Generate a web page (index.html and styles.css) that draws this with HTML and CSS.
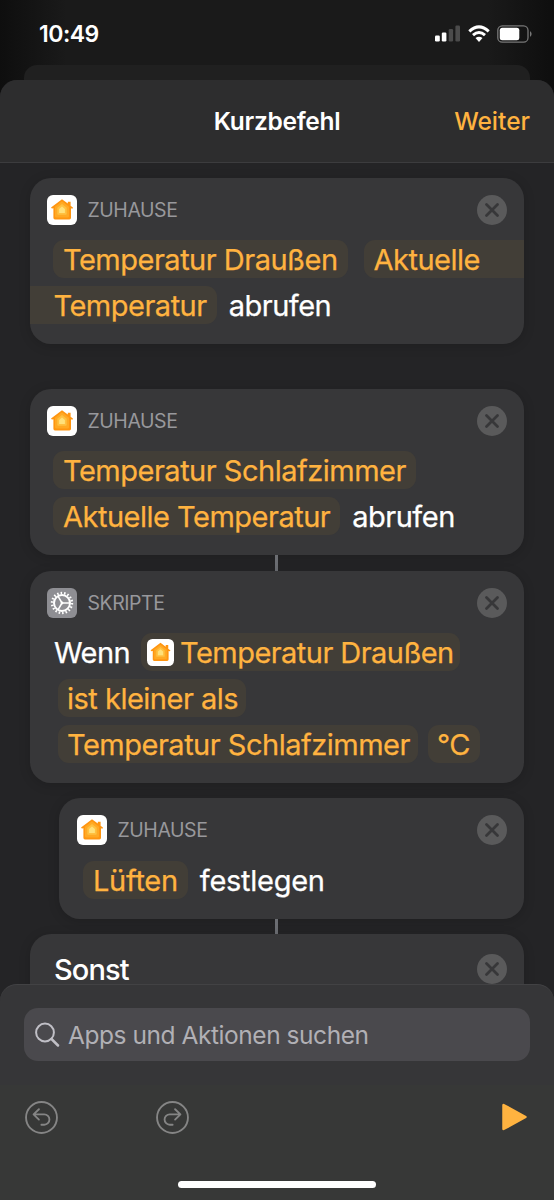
FILE: index.html
```html
<!DOCTYPE html>
<html lang="de">
<head>
<meta charset="utf-8">
<title>Kurzbefehl</title>
<link rel="stylesheet" href="styles.css">
</head>
<body>
<svg class="defs" width="0" height="0" aria-hidden="true">
  <defs>
    <symbol id="home" viewBox="0 0 30 30">
      <rect width="30" height="30" rx="6" fill="#fff"/>
      <path d="M4 12.600 15 4.200l5.800 4.400V6.700h2.800v4.100l2.500 1.900-.8 1-1.300-.5v9.600q0 1.600-1.600 1.600H8q-1.600 0-1.600-1.600v-9.600l-1.500.4z" fill="#ff9510"/>
      <path d="M15 6.300l7 5.500v9.500q0 1.300-1.300 1.300H9.300Q8 22.600 8 21.300v-9.500z" fill="#ffa924"/>
      <path d="M15 9l4.700 3.800v6q0 1-1 1h-7.400q-1 0-1-1v-6z" fill="#ffc040"/>
      <path d="M15 11.500l2.900 2.400v4.100h-5.800v-4.100z" fill="#ffe07a"/>
    </symbol>
    <symbol id="gear" viewBox="0 0 30 30">
      <rect width="30" height="30" rx="6" fill="#8e8e93"/>
      <circle cx="15" cy="15" r="10" fill="none" stroke="#fff" stroke-width="2.400" stroke-dasharray="1.550 1.941"/>
      <circle cx="15" cy="15" r="8" fill="none" stroke="#fff" stroke-width="2"/>
      <path d="M15 15h8M15 15l-4-6.900M15 15l-4 6.900" stroke="#fff" stroke-width="1.500"/>
      <circle cx="15" cy="15" r="1.400" fill="#fff"/>
    </symbol>
    <symbol id="close" viewBox="0 0 30 30">
      <circle cx="15" cy="15" r="15" fill="#5a5a5b"/>
      <path d="M9.500 9.500l11 11m0-11l-11 11" stroke="#373739" stroke-width="2.800" stroke-linecap="round"/>
    </symbol>
  </defs>
</svg>
<div class="screen">
  <div class="status">
    <span class="time">10:49</span>
    <div class="indicators">
      <svg width="26" height="17" viewBox="0 0 26 17"><g fill="#fff"><rect y="10.500" width="4.800" height="6" rx="1.200"/><rect x="6.800" y="7.500" width="4.600" height="9" rx="1.200"/></g><g fill="#4b4b4b"><rect x="13.700" y="4" width="4.400" height="12.500" rx="1.200"/><rect x="20.400" y=".5" width="4.600" height="16" rx="1.200"/></g></svg>
      <svg width="22" height="18" viewBox="0 0 22 18"><g fill="none" stroke="#fff" stroke-width="3"><path d="M1.300 6.300Q11-2.600 20.700 6.300"/><path d="M5 10.200q6-5.300 12 0"/></g><path d="M7.500 13.100q3.500-2.900 7 0L11 16.900z" fill="#fff"/></svg>
      <svg width="36" height="18" viewBox="0 0 36 18"><rect x=".8" y=".8" width="30.200" height="16.400" rx="4.500" fill="none" stroke="#777" stroke-width="1.300"/><rect x="2.800" y="2.800" width="19.500" height="12.400" rx="2.500" fill="#fff"/><path d="M33 6q3.300 3 0 6z" fill="#777"/></svg>
    </div>
  </div>
  <div class="back-sheet"></div>
  <div class="sheet">
    <header class="nav"><h1>Kurzbefehl</h1><a class="next">Weiter</a></header>
    <main class="flow">
      <section class="card detached">
        <div class="head"><svg class="app"><use href="#home"/></svg><span>ZUHAUSE</span><svg class="x"><use href="#close"/></svg></div>
        <div class="row"><b class="pill">Temperatur Draußen</b><b class="pill runs-on">Aktuelle</b></div>
        <div class="row"><b class="pill continued">Temperatur</b><span>abrufen</span></div>
      </section>
      <section class="card">
        <div class="head"><svg class="app"><use href="#home"/></svg><span>ZUHAUSE</span><svg class="x"><use href="#close"/></svg></div>
        <div class="row"><b class="pill">Temperatur Schlafzimmer</b></div>
        <div class="row"><b class="pill">Aktuelle Temperatur</b><span>abrufen</span></div>
      </section>
      <div class="link"></div>
      <section class="card condition">
        <div class="head"><svg class="app"><use href="#gear"/></svg><span>SKRIPTE</span><svg class="x"><use href="#close"/></svg></div>
        <div class="row first"><span>Wenn</span><b class="pill variable"><svg class="mini"><use href="#home"/></svg>Temperatur Draußen</b></div>
        <div class="row"><b class="pill">ist kleiner als</b></div>
        <div class="row"><b class="pill">Temperatur Schlafzimmer</b><b class="pill unit">°C</b></div>
      </section>
      <div class="space"></div>
      <section class="card nested">
        <div class="head"><svg class="app"><use href="#home"/></svg><span>ZUHAUSE</span><svg class="x"><use href="#close"/></svg></div>
        <div class="row"><b class="pill">Lüften</b><span>festlegen</span></div>
      </section>
      <div class="link short"></div>
      <section class="card otherwise"><span>Sonst</span><svg class="x"><use href="#close"/></svg></section>
    </main>
  </div>
  <footer class="dock">
    <div class="search">
      <svg width="26" height="26" viewBox="0 0 26 26" fill="none" stroke="#c0bfc6" stroke-linecap="round"><circle cx="10" cy="10.500" r="8.900" stroke-width="2"/><path d="M16.500 17l6.500 6.500" stroke-width="2.500"/></svg>
      <span>Apps und Aktionen suchen</span>
    </div>
    <div class="tools">
      <svg class="tool" viewBox="0 0 32 32"><circle cx="16" cy="16" r="15"/><path d="M13.500 8L8.300 13l5.200 5M8.800 13h9.900a5 5 0 0 1 0 10h-2.800"/></svg>
      <svg class="tool redo" viewBox="0 0 32 32"><circle cx="16" cy="16" r="15"/><path d="M18.500 8l5.200 5-5.200 5M23.200 13h-9.900a5 5 0 0 0 0 10h2.800"/></svg>
      <svg class="play" width="25" height="28" viewBox="0 0 25 28"><path d="M1.500 2v24L23.500 14z" fill="#ffb340" stroke="#ffb340" stroke-width="2.500" stroke-linejoin="round"/></svg>
    </div>
    <div class="home-bar"></div>
  </footer>
</div>
</body>
</html>
```
FILE: styles.css
```css
* { box-sizing: border-box; }
body { margin: 0; background: #171717; font-family: Inter, "Liberation Sans", sans-serif; color: #fff; }
svg { display: block; flex: none; }
.defs { position: absolute; }
.screen { width: 554px; height: 1200px; overflow: hidden; display: flex; flex-direction: column; background: linear-gradient(90deg, #0e0e0e, #1a1a1a 12%, #1a1a1a 88%, #0e0e0e); }
.status { height: 65px; flex: none; display: flex; justify-content: space-between; padding: 20px 21px 0 39px; }
.time { font-size: 23px; line-height: 28px; font-weight: 600; letter-spacing: -.5px; }
.indicators { display: flex; gap: 7px; padding-top: 5px; }
.back-sheet { height: 15px; flex: none; margin: 0 24px; border-radius: 13px 13px 0 0; background: #202020; }
.sheet { height: 922px; flex: none; overflow: hidden; border-radius: 17px 17px 0 0; background: #242426; }
.nav { height: 83px; border-bottom: 1px solid #3c3c3e; background: #2d2d2e; display: grid; grid-template-columns: 1fr auto 1fr; align-items: center; padding: 0 24px; }
.nav h1 { grid-column: 2; margin: 0; font-size: 24.500px; font-weight: 600; letter-spacing: -.3px; }
.next { justify-self: end; color: #ffb340; font-size: 24.500px; font-weight: 500; }
.flow { padding: 15px 30px 0; }
.card { width: 494px; padding: 17px 17px 20px 24px; border-radius: 21px; background: #373739; box-shadow: 0 2px 12px rgba(0, 0, 0, .16); font-size: 29px; letter-spacing: -.5px; }
.detached { margin-bottom: 45px; }
.head { height: 30px; margin: 0 0 15px -7px; display: flex; align-items: center; gap: 10.500px; color: #98989c; font-size: 19.500px; letter-spacing: -.45px; }
.app, .x { width: 30px; height: 30px; }
.x { margin-left: auto; }
.row { height: 38px; display: flex; align-items: center; gap: 12px; white-space: nowrap; -webkit-text-stroke: .25px; }
.row + .row { margin-top: 8px; }
.pill { height: 38px; display: flex; align-items: center; margin-left: -1px; padding: 0 10px; border-radius: 11px; background: #423e37; color: #ffb340; font-weight: 400; }
.runs-on { flex: 1; margin: 0 -17px 0 4px; border-radius: 11px 0 0 11px; }
.continued { margin-left: -24px; padding-left: 23.500px; border-radius: 0 11px 11px 0; }
.condition .row { padding-left: 4px; gap: 10px; }
.condition .first { padding-left: 0; gap: 11px; letter-spacing: -.55px; }
.condition .pill { margin-left: 0; padding: 0 8px 0 9px; }
.condition .variable { padding: 0 6px; gap: 6px; }
.condition .unit { padding: 0 10px 0 9px; }
.mini { width: 27px; height: 27px; }
.link { width: 3px; height: 16px; margin: 0 0 0 245px; background: #6b6d72; }
.short { height: 15px; }
.space { height: 15px; }
.nested { width: 465px; margin-left: 29px; padding-bottom: 20px; letter-spacing: -.28px; }
.nested .head { margin: 0 0 16px -6px; }
.nested .pill { margin-left: 0; }
.otherwise { height: 90px; display: flex; justify-content: space-between; padding-top: 22px; align-items: flex-start; font-weight: 500; line-height: 28px; letter-spacing: -.9px; }
.otherwise .x { margin-top: -2px; }
.dock { position: relative; height: 216px; flex: none; margin-top: -18px; border-radius: 17px 17px 0 0; border-top: 1px solid #424244; background: linear-gradient(#363638 100px, #373837 100px); }
.search { height: 53px; margin: 23px 24px 0; padding-left: 11px; display: flex; align-items: center; gap: 7px; border-radius: 14px; background: #4a494d; color: #b1b0b5; font-size: 24.500px; letter-spacing: -.45px; }
.tools { height: 32px; margin-top: 40px; padding: 0 27px 0 25px; display: flex; align-items: center; }
.tool { width: 33px; height: 33px; fill: none; stroke: #858585; stroke-width: 1.800; stroke-linecap: round; stroke-linejoin: round; }
.redo { margin-left: 98px; }
.play { margin-left: auto; }
.home-bar { width: 198px; height: 7px; margin: 48px auto 0; border-radius: 4px; background: #fff; }
```
